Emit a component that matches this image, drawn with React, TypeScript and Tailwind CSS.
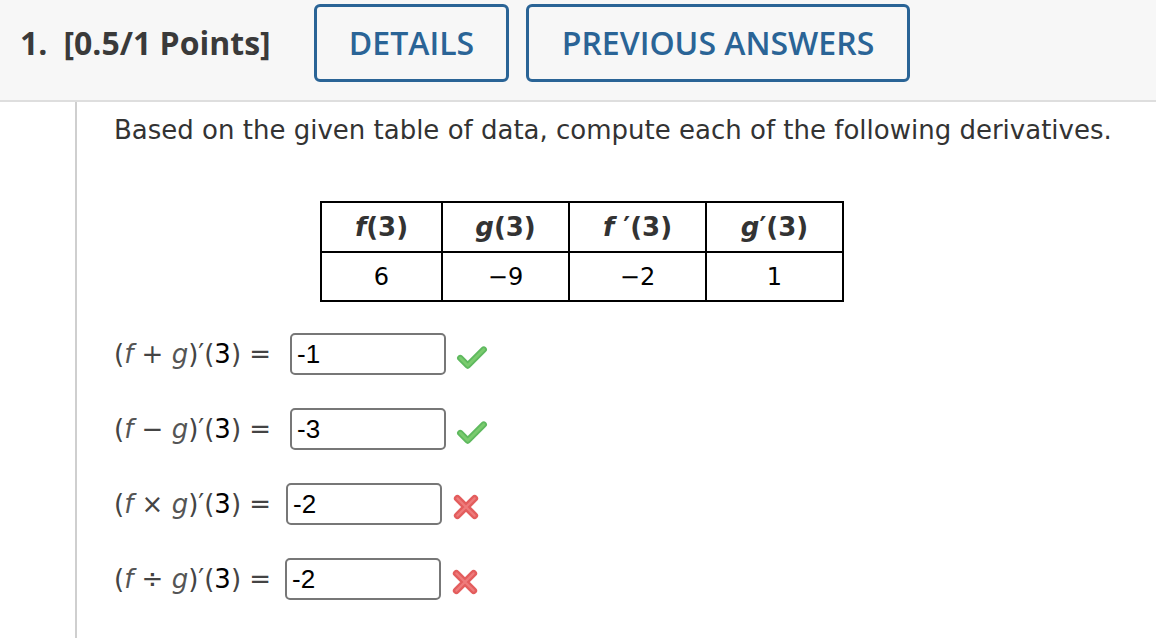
import React from 'react';

const blue = 'text-[#2a6496] border-[#2a6496]';

function Check() {
  return (
    <svg width="32" height="26" viewBox="0 0 30 24" className="shrink-0">
      <path d="M4 13 L11 20 L26 5" fill="none" stroke="#5fb95f" strokeWidth="6" strokeLinecap="round" strokeLinejoin="round" />
      <path d="M4 13 L11 20 L26 5" fill="none" stroke="#7acb6e" strokeWidth="2.5" strokeLinecap="round" strokeLinejoin="round" />
    </svg>
  );
}

function Cross() {
  return (
    <svg width="28" height="28" viewBox="0 0 26 26" className="shrink-0">
      <path d="M5 5 L21 21 M21 5 L5 21" fill="none" stroke="#e35d5d" strokeWidth="6.5" strokeLinecap="round" />
      <path d="M5 5 L21 21 M21 5 L5 21" fill="none" stroke="#ee7b7b" strokeWidth="2" strokeLinecap="round" />
    </svg>
  );
}

const rows = [
  { op: '+', val: '-1', ok: true, ml: 'ml-[19px]' },
  { op: '\u2212', val: '-3', ok: true, ml: 'ml-[19px]' },
  { op: '\u00d7', val: '-2', ok: false, ml: 'ml-[15px]' },
  { op: '\u00f7', val: '-2', ok: false, ml: 'ml-[14px]' },
];

export default function App() {
  return (
    <div className="w-[1156px] h-[638px] bg-white overflow-hidden" style={{ fontFamily: '"DejaVu Sans", Verdana, sans-serif' }}>
      <header className="h-[102px] bg-[#f7f7f7] border-b-2 border-[#dedede] flex items-start pt-[4px] pl-[20px]">
        <div className="w-[294px] h-[78px] flex items-center font-['Open_Sans',sans-serif] font-bold text-[32px] text-[#3a3a3a]">
          <span>1.</span>
          <span className="ml-[16px]">[0.5/1 Points]</span>
        </div>
        <button className={`h-[78px] w-[195px] border-[3px] rounded-[6px] bg-transparent font-['Open_Sans',sans-serif] font-semibold text-[32px] ${blue}`}>
          DETAILS
        </button>
        <button className={`ml-[17px] h-[78px] w-[384px] border-[3px] rounded-[6px] bg-transparent font-['Open_Sans',sans-serif] font-semibold text-[32px] ${blue}`}>
          PREVIOUS ANSWERS
        </button>
      </header>
      <div className="flex h-[536px]">
        <div className="w-[77px] border-r-2 border-[#cfcfcf] shrink-0" />
        <div className="pl-[37px] pt-[10px] flex-1 text-[#333]">
          <p className="text-[26px] leading-[36px]">Based on the given table of data, compute each of the following derivatives.</p>
          <table className="ml-[206px] mt-[53px] border-collapse border-2 border-black">
            <thead>
              <tr className="h-[50px] text-[26px]">
                <th className="w-[121px] border-2 border-black font-bold text-[#333]"><i>f</i>(3)</th>
                <th className="w-[127px] border-2 border-black font-bold text-[#333]"><i>g</i>(3)</th>
                <th className="w-[137px] border-2 border-black font-bold text-[#333]"><i>f</i> ′(3)</th>
                <th className="w-[137px] border-2 border-black font-bold text-[#333]"><i>g</i>′(3)</th>
              </tr>
            </thead>
            <tbody>
              <tr className="h-[49px] text-black text-[24px]">
                <td className="border-2 border-black text-center">6</td>
                <td className="border-2 border-black text-center">−9</td>
                <td className="border-2 border-black text-center">−2</td>
                <td className="border-2 border-black text-center">1</td>
              </tr>
            </tbody>
          </table>
          <div className="mt-[31px] flex flex-col gap-[33px]">
            {rows.map((r, i) => (
              <div key={i} className="flex items-center h-[42px]">
                <span className="text-[26px] text-[#444] whitespace-pre">
                  (<i className="text-[#555]">f</i> {r.op} <i className="text-[#555]">g</i>)′(<span className="text-black">3</span>) =
                </span>
                <div className={`${r.ml} w-[156px] h-[42px] border-2 border-[#777] rounded-[5px] flex items-center pl-[5px] font-['Liberation_Sans',Arial,sans-serif] text-[26px] text-black`}>
                  {r.val}
                </div>
                <div className="ml-[10px] mt-[6px]">{r.ok ? <Check /> : <Cross />}</div>
              </div>
            ))}
          </div>
        </div>
      </div>
    </div>
  );
}
